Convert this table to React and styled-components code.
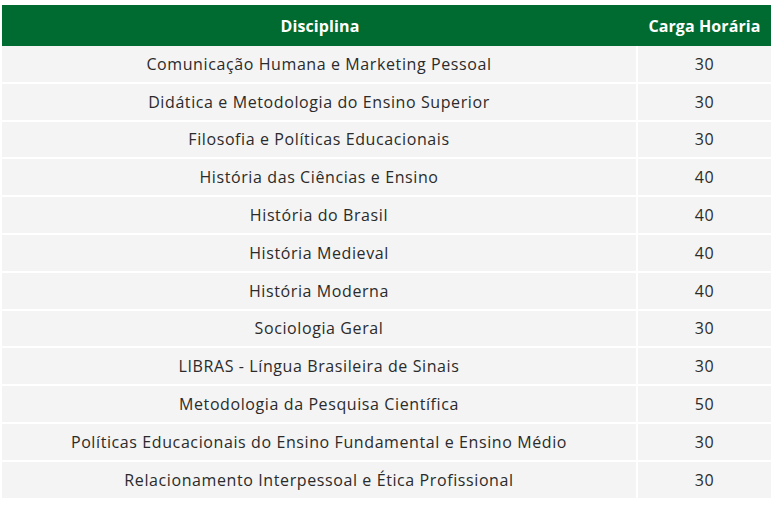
import React from "react";
import styled, { createGlobalStyle } from "styled-components";

const GlobalStyle = createGlobalStyle`
  body {
    margin: 0;
    background: #fff;
    font-family: "Open Sans", "Liberation Sans", sans-serif;
  }
`;

const Wrapper = styled.div`
  padding: 5px 4px 0 2px;
`;

const Table = styled.table`
  width: 769px;
  border-collapse: separate;
  border-spacing: 0;
  font-size: 16px;
  letter-spacing: 0.6px;
  color: #2b2b2b;

  th {
    background-color: #006b30;
    color: #fff;
    font-weight: 700;
    height: 41px;
    padding: 0 8px;
    text-align: center;
    font-size: 16px;
    letter-spacing: 0.1px;
  }

  td {
    background-color: #f4f4f4;
    height: 35.8px;
    padding: 0 8px;
    text-align: center;
    border-bottom: 2px solid #fff;
  }

  td:first-child {
    border-right: 2px solid #fff;
  }
`;

const Home = () => {
  const rows = [
    { name: "Comunicação Humana e Marketing Pessoal", hours: 30 },
    { name: "Didática e Metodologia do Ensino Superior", hours: 30 },
    { name: "Filosofia e Políticas Educacionais", hours: 30 },
    { name: "História das Ciências e Ensino", hours: 40 },
    { name: "História do Brasil", hours: 40 },
    { name: "História Medieval", hours: 40 },
    { name: "História Moderna", hours: 40 },
    { name: "Sociologia Geral", hours: 30 },
    { name: "LIBRAS - Língua Brasileira de Sinais", hours: 30 },
    { name: "Metodologia da Pesquisa Científica", hours: 50 },
    { name: "Políticas Educacionais do Ensino Fundamental e Ensino Médio", hours: 30 },
    { name: "Relacionamento Interpessoal e Ética Profissional", hours: 30 },
  ];
  return (
    <Wrapper>
      <GlobalStyle />
      <Table>
        <thead>
          <tr>
            <th>Disciplina</th>
            <th style={{ width: "117px" }}>Carga Horária</th>
          </tr>
        </thead>
        <tbody>
          {rows.map(({ name, hours }) => (
            <tr key={name}>
              <td>{name}</td>
              <td>{hours}</td>
            </tr>
          ))}
        </tbody>
      </Table>
    </Wrapper>
  );
};

export default Home;
